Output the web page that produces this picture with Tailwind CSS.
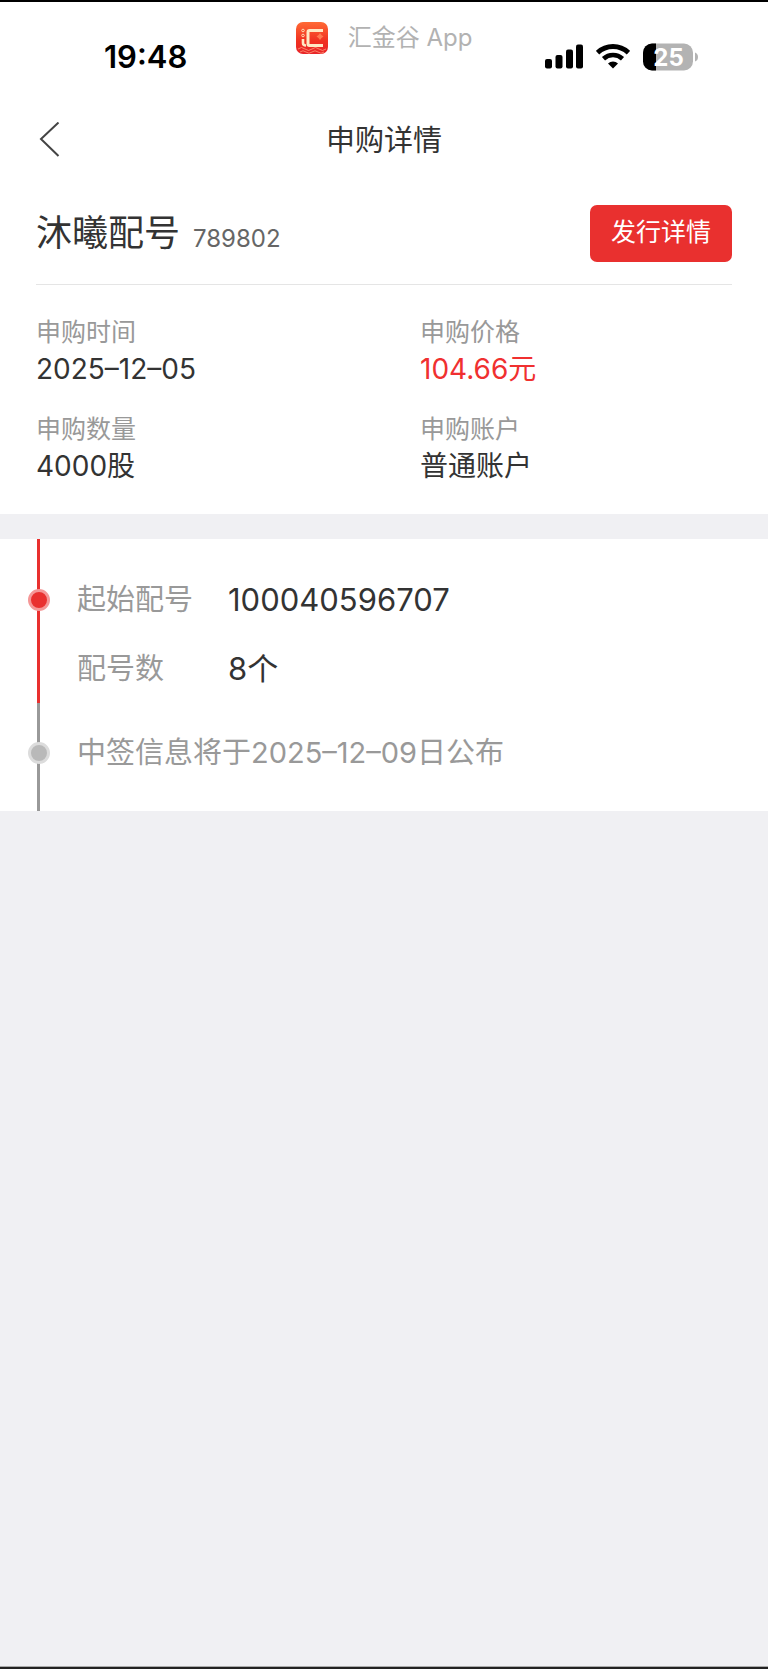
<!DOCTYPE html>
<html lang="zh-CN">
  <head>
    <meta charset="UTF-8" />
    <meta name="viewport" content="width=device-width, initial-scale=1.0" />
    <title>申购详情</title>
    <script src="https://cdn.jsdelivr.net/npm/@tailwindcss/browser@4"></script>
  </head>

  <body class="flex min-h-screen flex-col border-t-2 border-black bg-[#f0f0f3] font-['Inter','Noto_Sans_CJK_SC',sans-serif] text-[#333]">
    <header class="bg-white">
      <!-- 状态栏 -->
      <div class="grid h-24 grid-cols-[1fr_auto_1fr] items-start">
        <div class="mt-[35px] pl-[104px] text-[31px] leading-10 font-semibold text-black">19:48</div>
        <div class="mt-5 flex items-center gap-5">
          <svg class="size-8" viewBox="0 0 32 32" fill="none" aria-hidden="true">
            <defs>
              <linearGradient id="logo" x1="0" y1="0" x2="0" y2="1">
                <stop offset="0" stop-color="#ff6a35" />
                <stop offset="0.6" stop-color="#f03020" />
                <stop offset="1" stop-color="#e8252a" />
              </linearGradient>
            </defs>
            <rect width="32" height="32" rx="7" fill="url(#logo)" />
            <path d="M2 27q3.500-3 7 0t7 0 7 0 7 0M4 30q3-2.500 6 0t6 0 6 0 6 0" stroke="#ff9a78" stroke-width="0.800" />
            <path d="M27 8.500H13.500Q12 8.500 12 10v12q0 1.500 1.500 1.500H27" stroke="#ffe9c4" stroke-width="3" />
            <path d="M7 17v4q0 2.500 3 2.500" stroke="#ffe9c4" stroke-width="2.600" />
            <circle cx="7" cy="8.500" r="1.300" stroke="#ffd9b0" />
            <circle cx="7" cy="13.500" r="1.300" stroke="#ffd9b0" />
            <path d="M24 11l1.500 2 2 1.500-2 1.500-1.500 2-1.500-2-2-1.500 2-1.500z" fill="#ff7a50" />
          </svg>
          <span class="text-[24px] leading-8 text-[#b2b2b2]">汇金谷 App</span>
        </div>
        <div class="mt-[35px] flex h-10 items-center justify-end gap-[13px] pr-[70px]">
          <svg class="h-[26px] w-[38px]" viewBox="0 0 38 26" aria-hidden="true">
            <rect x="0" y="15" width="7" height="9.500" rx="2" />
            <rect x="10.500" y="11" width="7" height="13.500" rx="2" />
            <rect x="21" y="5.500" width="7" height="19" rx="2" />
            <rect x="31" y="0.500" width="7" height="24" rx="2" />
          </svg>
          <svg class="h-[26px] w-[34px]" viewBox="0 0 34 26" aria-hidden="true">
            <path d="M1.500 8.700a22.500 22.500 0 0 1 31 0" fill="none" stroke="#000" stroke-width="5" />
            <path d="M7.500 14.700a14 14 0 0 1 19 0" fill="none" stroke="#000" stroke-width="4.600" />
            <path d="M17 24.500l-5-5a7.500 7.500 0 0 1 10 0z" />
          </svg>
          <svg class="h-7 w-[55px]" viewBox="0 0 55 28" role="img" aria-label="电量 25%">
            <defs>
              <clipPath id="cell"><rect y="0.500" width="50" height="27" rx="9" /></clipPath>
            </defs>
            <g clip-path="url(#cell)">
              <rect width="50" height="28" fill="#b3b3b3" />
              <rect width="13" height="28" />
            </g>
            <path d="M52 9.500q3 1 3 4.500t-3 4.500z" fill="#b3b3b3" />
            <text x="25.500" y="22.500" text-anchor="middle" class="fill-white text-[24px] font-bold">25</text>
          </svg>
        </div>
      </div>

      <nav class="grid h-21 grid-cols-[1fr_auto_1fr] items-center px-9">
        <button type="button" aria-label="返回" class="w-10 cursor-pointer">
          <svg class="h-9 w-6" viewBox="0 0 24 36" fill="none" stroke="#444" stroke-width="2" aria-hidden="true">
            <path d="M22.500 0.500L5 17l17.500 17" />
          </svg>
        </button>
        <h1 class="pt-0.5 text-[29px] leading-10">申购详情</h1>
      </nav>
    </header>

    <main>
      <section class="bg-white px-9 pb-[29px]">
        <div class="flex h-[103px] items-center justify-between border-b border-[#e5e5e5]">
          <div class="flex items-end gap-[13px]">
            <h2 class="text-[36px] leading-[50px]">沐曦配号</h2>
            <span class="text-[24px] leading-[38px] text-[#666]">789802</span>
          </div>
          <button type="button" class="h-[57px] cursor-pointer rounded-[7px] bg-[#e9302f] px-[21px] text-[25px] text-white">发行详情</button>
        </div>

        <dl class="mt-[29px] grid grid-cols-2 gap-x-9 gap-y-[23px]">
          <div>
            <dt class="text-[25px] leading-9 text-[#999]">申购时间</dt>
            <dd class="text-[28px] leading-[38px]">2025–12–05</dd>
          </div>
          <div class="pl-[18px]">
            <dt class="text-[25px] leading-9 text-[#999]">申购价格</dt>
            <dd class="text-[28px] leading-[38px] text-[#f03030]">104.66元</dd>
          </div>
          <div>
            <dt class="text-[25px] leading-9 text-[#999]">申购数量</dt>
            <dd class="text-[28px] leading-[38px]">4000股</dd>
          </div>
          <div class="pl-[18px]">
            <dt class="text-[25px] leading-9 text-[#999]">申购账户</dt>
            <dd class="text-[28px] leading-[38px]">普通账户</dd>
          </div>
        </dl>
      </section>

      <!-- 配号进度 -->
      <ol class="mt-[25px] bg-white pl-[37px]">
        <li class="relative border-l-3 border-[#e9302f] pt-[26px] pl-[37px]">
          <span class="absolute top-[50px] -left-3 size-[22px] rounded-full border-3 border-[#f59797] bg-[#e9302f]"></span>
          <dl class="grid grid-cols-[151px_1fr] leading-[69px]">
            <dt class="text-[29px] text-[#999]">起始配号</dt>
            <dd class="text-[31px]">100040596707</dd>
            <dt class="text-[29px] text-[#999]">配号数</dt>
            <dd class="text-[31px]">8个</dd>
          </dl>
        </li>
        <li class="relative border-l-3 border-[#999] pt-[15px] pb-6 pl-[37px]">
          <span class="absolute top-[39px] -left-3 size-[22px] rounded-full border-3 border-[#dcdcdc] bg-[#b9b9b9]"></span>
          <p class="text-[29px] leading-[69px] text-[#999]">中签信息将于2025–12–09日公布</p>
        </li>
      </ol>
    </main>

    <footer class="mt-auto h-[3px] border-t border-[#aaa] bg-[#222]"></footer>
  </body>
</html>
